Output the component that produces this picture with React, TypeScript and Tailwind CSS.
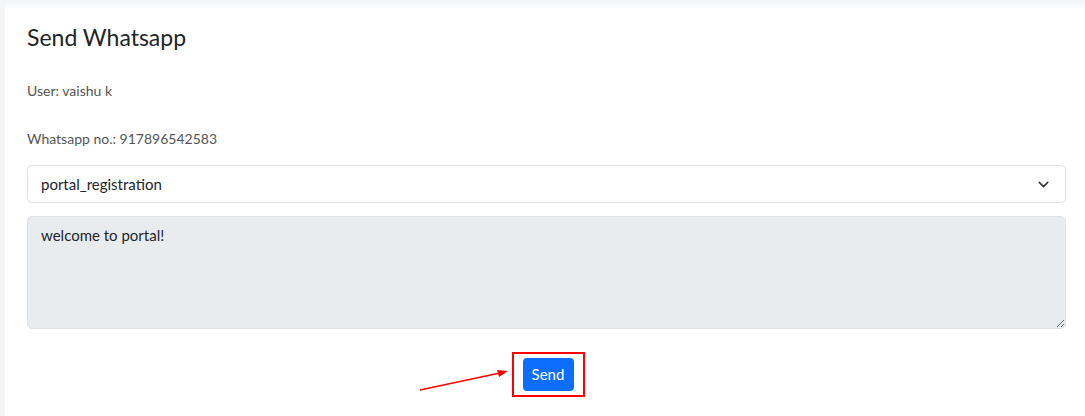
import { ChevronDown } from "lucide-react";

export default function App() {
  return (
    <div
      className="flex h-[416px] w-[1085px] overflow-hidden bg-[#f5f6f8] pl-[5px]"
      style={{ fontFamily: "Lato, 'Open Sans', sans-serif" }}
    >
      <div className="flex flex-1 flex-col bg-white">
        {/* faint top shadow */}
        <div className="h-[10px] bg-gradient-to-b from-[#f3f4f7] to-white" />
        <div className="flex flex-col pl-[22px] pr-[19px]">
          <h4 className="mt-[13px] text-[23px] leading-[29px] text-[#212529]">Send Whatsapp</h4>
          <p className="mt-[28px] text-[14px] leading-[21px] text-[#555]">User: vaishu k</p>
          <p className="mt-[27px] text-[14px] leading-[21px] text-[#555]">Whatsapp no.: 917896542583</p>

          <div className="mt-[16px] flex h-[38px] items-center justify-between rounded-[5px] border border-[#dee2e6] bg-white pl-[13px] pr-[13px]">
            <span className="text-[15px] text-[#212529]">portal_registration</span>
            <ChevronDown size={17} strokeWidth={2.2} className="text-[#343a40]" />
          </div>

          <textarea
            disabled
            defaultValue="welcome to portal!"
            className="mt-[13px] h-[113px] resize-y rounded-[5px] border border-[#dee2e6] bg-[#e9ecef] px-[13px] py-[7px] text-[15px] leading-[22px] text-[#212529] outline-none"
          />

          <div className="mt-[23px] flex justify-center pl-[3px]">
            <div className="relative border-2 border-[#ff0000] px-[9px] py-[4px]">
              <button className="h-[33px] w-[51px] rounded-[4px] bg-[#0d6efd] text-[15px] text-white">
                Send
              </button>
              {/* annotation arrow */}
              <svg
                className="absolute left-[-96px] top-[14px]"
                width="92"
                height="24"
                viewBox="0 0 92 24"
              >
                <line x1="2" y1="22" x2="82" y2="5" stroke="#ff0000" strokeWidth="1.3" />
                <polygon points="90,3 79,2 81,9" fill="#ff0000" />
              </svg>
            </div>
          </div>
        </div>
      </div>
    </div>
  );
}
